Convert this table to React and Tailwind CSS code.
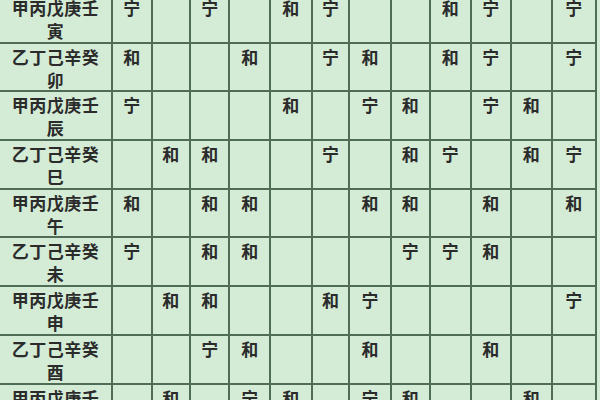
const rows = [
  { stems: '甲丙戊庚壬', branch: '寅', cells: { 1: '宁', 3: '宁', 5: '和', 6: '宁', 9: '和', 10: '宁', 12: '宁' } },
  { stems: '乙丁己辛癸', branch: '卯', cells: { 1: '和', 4: '和', 6: '宁', 7: '和', 9: '和', 10: '宁', 12: '宁' } },
  { stems: '甲丙戊庚壬', branch: '辰', cells: { 1: '宁', 5: '和', 7: '宁', 8: '和', 10: '宁', 11: '和' } },
  { stems: '乙丁己辛癸', branch: '巳', cells: { 2: '和', 3: '和', 6: '宁', 8: '和', 9: '宁', 11: '和', 12: '宁' } },
  { stems: '甲丙戊庚壬', branch: '午', cells: { 1: '和', 3: '和', 4: '和', 7: '和', 8: '和', 10: '和', 12: '和' } },
  { stems: '乙丁己辛癸', branch: '未', cells: { 1: '宁', 3: '和', 4: '和', 8: '宁', 9: '宁', 10: '和' } },
  { stems: '甲丙戊庚壬', branch: '申', cells: { 2: '和', 3: '和', 6: '和', 7: '宁', 12: '宁' } },
  { stems: '乙丁己辛癸', branch: '酉', cells: { 3: '宁', 4: '和', 7: '和', 10: '和' } },
  { stems: '甲丙戊庚壬', branch: '戌', cells: { 2: '和', 4: '宁', 5: '和', 7: '宁', 8: '和', 11: '和' } },
]

const cols = [1, 2, 3, 4, 5, 6, 7, 8, 9, 10, 11, 12]

export default function App() {
  return (
    <div
      className="w-[600px] h-[400px] overflow-hidden bg-[#d7eed8] text-[#2b2b2b]"
      style={{ fontFamily: '"Noto Sans CJK SC", "Noto Sans", sans-serif' }}
    >
      {/* table starts slightly above the viewport, as in the cropped screenshot */}
      <div className="mt-[-5px] grid grid-cols-[113px_39.7px_38.3px_39.3px_40.7px_41.7px_37.6px_41.4px_39.3px_40.7px_40px_41px_44.3px] auto-rows-[48.7px] bg-[#d4ebd5]">
        {rows.map((row, i) => (
          <div key={i} className="contents">
            <div className="border-r-2 border-b-2 border-[#4f6c56] pt-[1px] text-center text-[17px] leading-[23px] font-semibold tracking-[0.5px]">
              <div>{row.stems}</div>
              <div>{row.branch}</div>
            </div>
            {cols.map((c) => (
              <div
                key={c}
                className="border-r-2 border-b-2 border-[#4f6c56] pt-[1px] text-center text-[17px] leading-[23px] font-semibold"
              >
                {row.cells[c] || ''}
              </div>
            ))}
          </div>
        ))}
      </div>
    </div>
  )
}
